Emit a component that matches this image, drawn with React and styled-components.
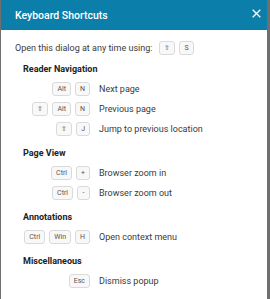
import React from "react";
import styled, { createGlobalStyle } from "styled-components";

const Global = createGlobalStyle`
  html, body {
    margin: 0;
    padding: 0;
    background: #6f6f6f;
  }
  body {
    font-family: Roboto, "Liberation Sans", sans-serif;
  }
`;

const sections = [
  {
    title: "Reader Navigation",
    rows: [
      { keys: ["Alt", "N"], label: "Next page" },
      { keys: ["⇧", "Alt", "N"], label: "Previous page" },
      { keys: ["⇧", "J"], label: "Jump to previous location" },
    ],
  },
  {
    title: "Page View",
    rows: [
      { keys: ["Ctrl", "+"], label: "Browser zoom in" },
      { keys: ["Ctrl", "-"], label: "Browser zoom out" },
    ],
  },
  {
    title: "Annotations",
    rows: [{ keys: ["Ctrl", "Win", "H"], label: "Open context menu" }],
  },
  {
    title: "Miscellaneous",
    rows: [{ keys: ["Esc"], label: "Dismiss popup" }],
  },
];

const CloseIcon = () => (
  <svg width="9" height="9" viewBox="0 0 9 9">
    <path d="M0.7 0.7 L8.3 8.3 M8.3 0.7 L0.7 8.3" stroke="#fff" strokeWidth="1.3" />
  </svg>
);

const App = () => (
  <>
    <Global />
    <Dialog>
      <Header>
        <Title>Keyboard Shortcuts</Title>
        <Close type="button" aria-label="Close">
          <CloseIcon />
        </Close>
      </Header>
      <Body>
        <Intro>
          Open this dialog at any time using:
          <Keys>
            <Key>⇧</Key>
            <Key>S</Key>
          </Keys>
        </Intro>
        {sections.map((section) => (
          <Section key={section.title}>
            <Heading>{section.title}</Heading>
            {section.rows.map((row) => (
              <Row key={row.label}>
                <Keys right>
                  {row.keys.map((k, i) => (
                    <Key key={i}>{k}</Key>
                  ))}
                </Keys>
                <Label>{row.label}</Label>
              </Row>
            ))}
          </Section>
        ))}
      </Body>
    </Dialog>
  </>
);

export default App;

const Dialog = styled.div`
  width: 266px;
  height: 299px;
  margin-left: 1px;
  background: #fff;
  overflow: hidden;
`;

const Header = styled.div`
  height: 30px;
  background: #0c7eaa;
  display: flex;
  align-items: center;
  justify-content: space-between;
  padding: 0 6px 0 14px;
  box-sizing: border-box;
`;

const Title = styled.h2`
  margin: 0;
  color: #fff;
  font-size: 10.5px;
  font-weight: 500;
`;

const Close = styled.button`
  border: 0;
  background: none;
  padding: 0;
  display: flex;
  margin-top: -3px;
  cursor: pointer;
`;

const Body = styled.div`
  padding: 11px 14px 0;
  color: #3a3a3a;
`;

const Intro = styled.div`
  display: flex;
  align-items: center;
  gap: 7px;
  font-size: 9px;
  height: 14px;
  margin-bottom: 1px;
`;

const Keys = styled.div`
  display: flex;
  gap: 4px;
  justify-content: ${({ right }) => (right ? "flex-end" : "flex-start")};
`;

const Key = styled.span`
  min-width: 13px;
  height: 14px;
  box-sizing: border-box;
  padding: 0 4px;
  display: inline-flex;
  align-items: center;
  justify-content: center;
  border: 1px solid #dadada;
  border-radius: 3px;
  background: #f8f8f8;
  color: #555;
  font-size: 7px;
  line-height: 1;
`;

const Section = styled.div`
  margin-top: 7px;
  padding-left: 8px;
`;

const Heading = styled.div`
  font-size: 9px;
  font-weight: 700;
  color: #222;
  line-height: 14px;
  margin-bottom: 3px;
`;

const Row = styled.div`
  display: grid;
  grid-template-columns: 67px 1fr;
  column-gap: 9px;
  align-items: center;
  height: 20px;
`;

const Label = styled.span`
  font-size: 9px;
  color: #3a3a3a;
`;
